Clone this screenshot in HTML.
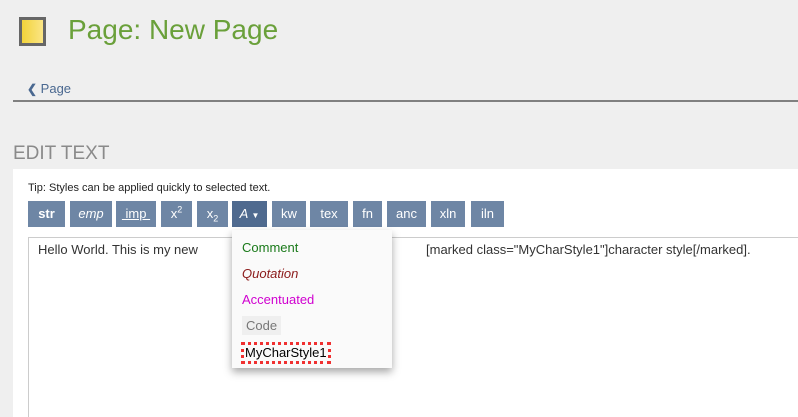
<!DOCTYPE html>
<html><head><style>
html,body{margin:0;width:798px;height:417px;overflow:hidden}
body{background:#efefef;font-family:"Liberation Sans",sans-serif;position:relative}
.a{position:absolute}
.btn{position:absolute;top:201px;height:26px;background:#6e86a5;color:#fff;font-size:13px;line-height:26px;text-align:center}
.it{position:absolute;left:242px;font-size:13px}
</style></head><body>
<div class="a" style="left:19px;top:17px;width:27px;height:29px;background:linear-gradient(90deg,#f2d33a,#fbe585);border:3px solid #666;box-sizing:border-box"></div>
<div class="a" style="left:68px;top:14px;font-size:28px;color:#6aa03a">Page: New Page</div>
<div class="a" style="left:27px;top:81px;font-size:13px;color:#4a6890"><b style="font-size:12px">&#10094;</b> Page</div>
<div class="a" style="left:13px;top:100px;width:785px;height:2px;background:#808080"></div>
<div class="a" style="left:13px;top:143px;font-size:19px;color:#8a8a8a">EDIT TEXT</div>
<div class="a" style="left:13px;top:169px;width:785px;height:248px;background:#fff"></div>
<div class="a" style="left:28px;top:182px;font-size:11px;color:#222">Tip: Styles can be applied quickly to selected text.</div>
<div class="btn" style="left:28px;width:37px;font-weight:bold">str</div>
<div class="btn" style="left:70px;width:42px;font-style:italic">emp</div>
<div class="btn" style="left:116px;width:40px;text-decoration:underline">&nbsp;imp&nbsp;</div>
<div class="btn" style="left:161px;width:31px">x<sup style="font-size:9px;line-height:0">2</sup></div>
<div class="btn" style="left:197px;width:31px">x<sub style="font-size:9px;line-height:0">2</sub></div>
<div class="btn" style="left:232px;width:35px;background:#4f6a8f;font-style:italic">A <span style="font-style:normal;font-size:8px">&#9660;</span></div>
<div class="btn" style="left:272px;width:34px">kw</div>
<div class="btn" style="left:310px;width:38px">tex</div>
<div class="btn" style="left:353px;width:29px">fn</div>
<div class="btn" style="left:387px;width:39px">anc</div>
<div class="btn" style="left:431px;width:34px">xln</div>
<div class="btn" style="left:471px;width:33px">iln</div>
<div class="a" style="left:28px;top:237px;width:780px;height:200px;border:1px solid #ccc;box-sizing:border-box"></div>
<div class="a" style="left:38px;top:242px;font-size:13px;color:#333">Hello World. This is my new</div>
<div class="a" style="left:426px;top:242px;font-size:13px;color:#333">[marked class="MyCharStyle1"]character style[/marked].</div>
<div class="a" style="left:232px;top:230px;width:160px;height:138px;background:#fafafa;box-shadow:0 4px 8px rgba(0,0,0,.35)"></div>
<div class="it" style="top:240px;color:#1a7a1a">Comment</div>
<div class="it" style="top:266px;color:#8b1a1a;font-style:italic">Quotation</div>
<div class="it" style="top:292px;color:#d000d0">Accentuated</div>
<div class="it" style="top:316px;left:242px;background:#efefef;color:#777;padding:2px 4px">Code</div>
<div class="it" style="top:342px;left:241px;border:3px dotted #f03030;color:#000;padding:0 1px;line-height:16px">MyCharStyle1</div>
</body></html>
